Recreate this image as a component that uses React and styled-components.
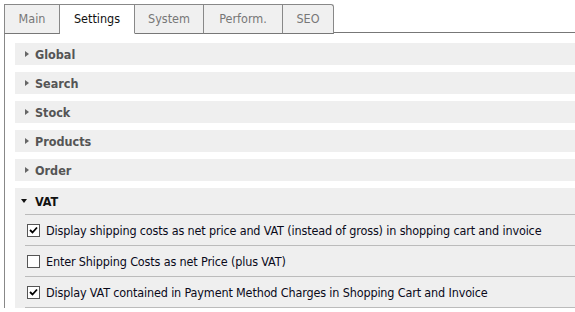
import React, { useState } from "react";
import styled, { createGlobalStyle } from "styled-components";

const GlobalStyle = createGlobalStyle`
  html, body {
    margin: 0;
    padding: 0;
    background: #ffffff;
    overflow: hidden;
  }
  body {
    font-family: Tahoma, "DejaVu Sans Condensed", "Liberation Sans", sans-serif;
    font-size: 13px;
  }
`;

const tabs = [
  { name: "Main", width: 56 },
  { name: "Settings", width: 75 },
  { name: "System", width: 69 },
  { name: "Perform.", width: 79 },
  { name: "SEO", width: 51 },
];

const sections = ["Global", "Search", "Stock", "Products", "Order"];

const vatOptions = [
  {
    label:
      "Display shipping costs as net price and VAT (instead of gross) in shopping cart and invoice",
    checked: true,
  },
  { label: "Enter Shipping Costs as net Price (plus VAT)", checked: false },
  {
    label:
      "Display VAT contained in Payment Method Charges in Shopping Cart and Invoice",
    checked: true,
  },
];

function App() {
  const [active, setActive] = useState("Settings");
  const [options, setOptions] = useState(vatOptions);

  const toggle = (i) => {
    setOptions(
      options.map((o, idx) => (idx === i ? { ...o, checked: !o.checked } : o))
    );
  };

  return (
    <Page>
      <GlobalStyle />
      <TabBar>
        {tabs.map((t) => (
          <Tab
            key={t.name}
            w={t.width}
            active={t.name === active}
            onClick={() => setActive(t.name)}
          >
            {t.name}
          </Tab>
        ))}
        <TabFill />
      </TabBar>
      <Panel>
        {sections.map((s) => (
          <SectionBar key={s}>
            <Arrow />
            {s}
          </SectionBar>
        ))}
        <Section>
          <SectionBar open>
            <Arrow open />
            VAT
          </SectionBar>
          <Options>
            {options.map((o, i) => (
              <OptionRow key={i} onClick={() => toggle(i)}>
                <Box>
                  {o.checked && (
                    <svg width="9" height="9" viewBox="0 0 9 9">
                      <path
                        d="M1 4 L3.5 6.5 L8 1.5"
                        fill="none"
                        stroke="#000"
                        strokeWidth="1.8"
                      />
                    </svg>
                  )}
                </Box>
                {o.label}
              </OptionRow>
            ))}
          </Options>
        </Section>
      </Panel>
    </Page>
  );
}

const Page = styled.div`
  width: 620px;
  padding: 4px 0 0 4px;
`;

const TabBar = styled.div`
  display: flex;
  align-items: stretch;
  height: 29px;
`;

const Tab = styled.div`
  box-sizing: border-box;
  width: ${(p) => p.w}px;
  height: 30px;
  padding-top: 6px;
  text-align: center;
  font-size: 12.5px;
  border: 1px solid #888;
  border-left-width: 0;
  border-bottom: ${(p) => (p.active ? "1px solid #fff" : "1px solid #777")};
  background: ${(p) => (p.active ? "#ffffff" : "#f0f0f0")};
  color: ${(p) => (p.active ? "#111" : "#777")};
  cursor: pointer;
  white-space: nowrap;
  &:first-child {
    border-left-width: 1px;
  }
  &:nth-child(5) {
    border-top-right-radius: 3px;
  }
`;

const TabFill = styled.div`
  flex: 1;
  border-bottom: 1px solid #777;
`;

const Panel = styled.div`
  border-left: 1px solid #888;
  padding: 10px 0 0 10px;
  display: flex;
  flex-direction: column;
  gap: 7px;
`;

const Section = styled.div`
  background: #efefef;
  display: flex;
  flex-direction: column;
`;

const SectionBar = styled.div`
  display: flex;
  align-items: center;
  height: ${(p) => (p.open ? "26px" : "22px")};
  padding-left: 10px;
  background: #efefef;
  color: ${(p) => (p.open ? "#111" : "#555")};
  font-weight: bold;
  font-size: 12.5px;
`;

const Arrow = styled.span`
  width: 0;
  height: 0;
  margin-right: 6px;
  ${(p) =>
    p.open
      ? `border-left: 3px solid transparent;
         border-right: 3px solid transparent;
         border-top: 4px solid #111;
         margin-left: -4px;
         margin-right: 8px;`
      : `border-top: 3px solid transparent;
         border-bottom: 3px solid transparent;
         border-left: 4px solid #666;`}
`;

const Options = styled.div`
  margin-left: 10px;
  border-top: 1px solid #bbb;
`;

const OptionRow = styled.label`
  display: flex;
  align-items: center;
  height: 30px;
  border-bottom: 1px solid #bbb;
  padding-left: 2px;
  font-size: 12.5px;
  letter-spacing: -0.15px;
  color: #0a0a1a;
  cursor: pointer;
  white-space: nowrap;
`;

const Box = styled.span`
  box-sizing: border-box;
  width: 13px;
  height: 13px;
  margin-right: 6px;
  border: 1px solid #555;
  background: #fff;
  display: flex;
  align-items: center;
  justify-content: center;
`;

export default App;
